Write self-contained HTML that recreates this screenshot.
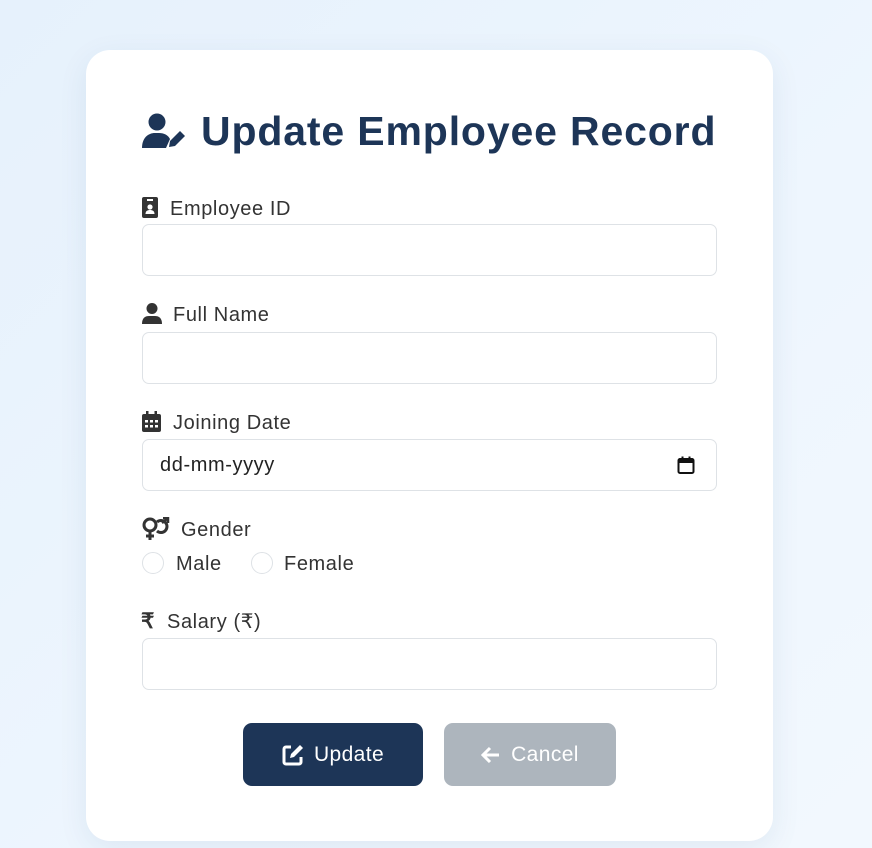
<!DOCTYPE html>
<html><head><style>
*{box-sizing:border-box;margin:0;padding:0}
body{width:872px;height:848px;background:linear-gradient(135deg,#e6f1fc,#eef6fe 60%,#f2f8fe);font-family:"Liberation Sans",sans-serif;position:relative;overflow:hidden}
.card{position:absolute;left:86px;top:50px;width:687px;height:791px;background:#fff;border-radius:24px;box-shadow:0 8px 30px rgba(30,60,110,.08)}
.a{position:absolute}
h1{position:absolute;left:201px;top:108px;font-size:41px;font-weight:bold;color:#1d3557;letter-spacing:0.85px;white-space:nowrap}
.lbl{position:absolute;font-size:20px;color:#333;white-space:nowrap;line-height:24px;letter-spacing:0.6px}
.inp{position:absolute;left:142px;width:575px;height:52px;border:1px solid #dee2e6;border-radius:7px;background:#fff}
.radio{position:absolute;width:22px;height:22px;border:1px solid #dee2e6;border-radius:50%}
.btn{position:absolute;top:723px;height:63px;border-radius:9px;color:#fff;font-size:21px;display:flex;align-items:center;justify-content:center;gap:10px;letter-spacing:0.4px}
</style></head><body>
<div class="card"></div>
<svg class="a" style="left:142px;top:113px" width="44" height="36" viewBox="0 0 44 36"><circle cx="15" cy="9" r="8.5" fill="#1d3557"/><path d="M0 35 C0 25 6 20 13 20 H17 C22 20 26 22 28 26 L24 35 Z" fill="#1d3557"/><path d="M27 34 L28 28 L38 18 L43 23 L33 33 Z" fill="#1d3557"/></svg>
<h1>Update Employee Record</h1>

<svg class="a" style="left:142px;top:197px" width="16" height="21" viewBox="0 0 16 21"><rect width="16" height="21" rx="2" fill="#333"/><rect x="5" y="2" width="6" height="2" fill="#fff"/><circle cx="8" cy="10" r="2.6" fill="#fff"/><path d="M3.5 17c0-3 2-4 4.5-4s4.5 1 4.5 4z" fill="#fff"/></svg>
<div class="lbl" style="left:170px;top:197px">Employee ID</div>
<div class="inp" style="top:224px"></div>

<svg class="a" style="left:142px;top:303px" width="20" height="21" viewBox="0 0 20 21"><circle cx="10" cy="5.5" r="5.5" fill="#333"/><path d="M0 21c0-6 3-8 7-8h6c4 0 7 2 7 8z" fill="#333"/></svg>
<div class="lbl" style="left:173px;top:303px">Full Name</div>
<div class="inp" style="top:332px"></div>

<svg class="a" style="left:142px;top:411px" width="19" height="21" viewBox="0 0 19 21"><rect x="0" y="3" width="19" height="18" rx="2" fill="#333"/><rect x="4" y="0" width="2.5" height="5" fill="#333"/><rect x="12.5" y="0" width="2.5" height="5" fill="#333"/><g fill="#fff"><rect x="3" y="9" width="3" height="2.5"/><rect x="8" y="9" width="3" height="2.5"/><rect x="13" y="9" width="3" height="2.5"/><rect x="3" y="14" width="3" height="2.5"/><rect x="8" y="14" width="3" height="2.5"/><rect x="13" y="14" width="3" height="2.5"/></g></svg>
<div class="lbl" style="left:173px;top:411px">Joining Date</div>
<div class="inp" style="top:439px"></div>
<div class="lbl" style="left:160px;top:453px;color:#222">dd-mm-yyyy</div>
<svg class="a" style="left:677px;top:456px" width="18" height="18" viewBox="0 0 18 18"><rect x="1.5" y="3" width="15" height="14" rx="1.5" fill="none" stroke="#111" stroke-width="2"/><rect x="1.5" y="3" width="15" height="4" fill="#111"/><rect x="4.5" y="0.5" width="2" height="4" fill="#111"/><rect x="11.5" y="0.5" width="2" height="4" fill="#111"/></svg>

<svg class="a" style="left:142px;top:517px" width="28" height="24" viewBox="0 0 28 24"><circle cx="8" cy="8" r="6" fill="none" stroke="#333" stroke-width="3"/><path d="M8 14v9M4 19h8" stroke="#333" stroke-width="3"/><path d="M15 5a6 6 0 1 1 0 9" fill="none" stroke="#333" stroke-width="3"/><path d="M20 6l6-5M21 1h5v5" fill="none" stroke="#333" stroke-width="2.5"/></svg>
<div class="lbl" style="left:181px;top:518px">Gender</div>
<div class="radio" style="left:142px;top:552px"></div>
<div class="lbl" style="left:176px;top:552px">Male</div>
<div class="radio" style="left:251px;top:552px"></div>
<div class="lbl" style="left:284px;top:552px">Female</div>

<div class="lbl" style="left:141px;top:610px;font-weight:bold;font-size:21px">₹</div>
<div class="lbl" style="left:167px;top:610px">Salary (₹)</div>
<div class="inp" style="top:638px"></div>

<div class="btn" style="left:243px;width:180px;background:#1d3557"><svg width="22" height="22" viewBox="0 0 22 22"><path d="M9 3H4a2 2 0 0 0-2 2v13a2 2 0 0 0 2 2h13a2 2 0 0 0 2-2v-5" fill="none" stroke="#fff" stroke-width="3"/><path d="M8 14l1-4 9-9 3 3-9 9z" fill="#fff"/></svg><span>Update</span></div>
<div class="btn" style="left:444px;width:172px;background:#adb5bd"><svg width="20" height="18" viewBox="0 0 20 18"><path d="M18 9H3M9 2L2 9l7 7" fill="none" stroke="#fff" stroke-width="3"/></svg><span>Cancel</span></div>
</body></html>
